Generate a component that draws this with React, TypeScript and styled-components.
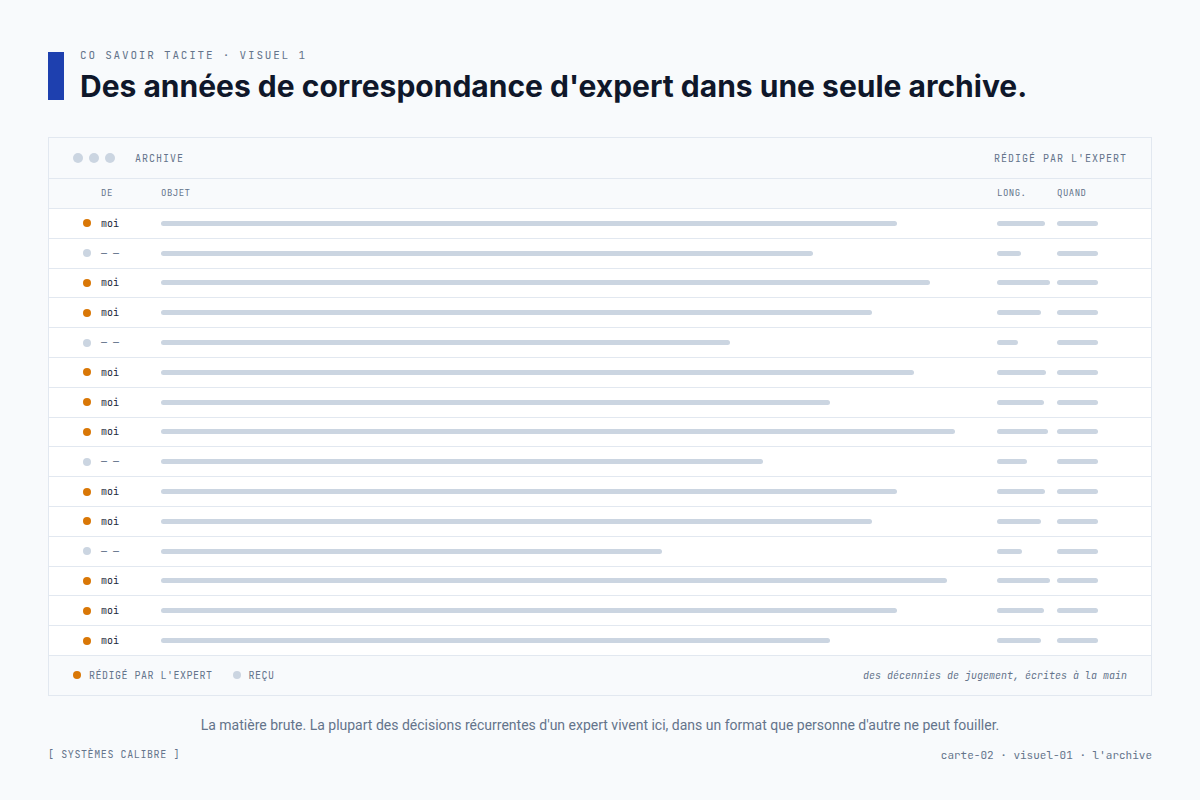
import React from 'react'
import styled, { createGlobalStyle } from 'styled-components'

const mono = `"JetBrains Mono", "DejaVu Sans Mono", monospace`

const GlobalStyle = createGlobalStyle`
  html, body {
    margin: 0;
    padding: 0;
    background: #f8fafc;
  }
  * {
    box-sizing: border-box;
  }
`

interface Row {
  mine: boolean
  subject: number
  length: number
}

const rows: Row[] = [
  { mine: true, subject: 736, length: 48 },
  { mine: false, subject: 652, length: 24 },
  { mine: true, subject: 769, length: 53 },
  { mine: true, subject: 711, length: 44 },
  { mine: false, subject: 569, length: 21 },
  { mine: true, subject: 753, length: 49 },
  { mine: true, subject: 669, length: 47 },
  { mine: true, subject: 794, length: 51 },
  { mine: false, subject: 602, length: 30 },
  { mine: true, subject: 736, length: 48 },
  { mine: true, subject: 711, length: 44 },
  { mine: false, subject: 501, length: 25 },
  { mine: true, subject: 786, length: 53 },
  { mine: true, subject: 736, length: 47 },
  { mine: true, subject: 669, length: 44 },
]

class App extends React.Component {
  render() {
    return (
      <Page>
        <GlobalStyle />
        <Heading>
          <Accent />
          <div>
            <Eyebrow>CO SAVOIR TACITE · VISUEL 1</Eyebrow>
            <Title>Des années de correspondance d'expert dans une seule archive.</Title>
          </div>
        </Heading>

        <Card>
          <WindowBar>
            <Lights>
              <Light />
              <Light />
              <Light />
            </Lights>
            <BarLabel>ARCHIVE</BarLabel>
            <BarLabel className="right">RÉDIGÉ PAR L'EXPERT</BarLabel>
          </WindowBar>

          <ColumnHead>
            <span />
            <ColLabel>DE</ColLabel>
            <ColLabel>OBJET</ColLabel>
            <ColLabel>LONG.</ColLabel>
            <ColLabel>QUAND</ColLabel>
          </ColumnHead>

          {rows.map((row, i) => (
            <MailRow key={i}>
              <Dot mine={row.mine} />
              <From mine={row.mine}>{row.mine ? 'moi' : '— —'}</From>
              <Cell><Bar style={{ width: row.subject }} /></Cell>
              <Cell><Bar style={{ width: row.length }} /></Cell>
              <Cell><Bar style={{ width: 41 }} /></Cell>
            </MailRow>
          ))}

          <Legend>
            <LegendItem>
              <Dot mine />
              RÉDIGÉ PAR L'EXPERT
            </LegendItem>
            <LegendItem>
              <Dot mine={false} />
              REÇU
            </LegendItem>
            <Note>des décennies de jugement, écrites à la main</Note>
          </Legend>
        </Card>

        <Caption>
          La matière brute. La plupart des décisions récurrentes d'un expert vivent ici, dans un format que personne d'autre ne peut fouiller.
        </Caption>

        <Foot>
          <span>[ SYSTÈMES CALIBRE ]</span>
          <span className="ref">carte-02 · visuel-01 · l'archive</span>
        </Foot>
      </Page>
    )
  }
}

const Page = styled.div`
  width: 1200px;
  height: 800px;
  padding: 48px 48px 0;
  background: #f8fafc;
`

const Heading = styled.header`
  display: flex;
  align-items: flex-start;
  gap: 16px;
  margin-bottom: 33px;
`

const Accent = styled.div`
  width: 16px;
  height: 48px;
  margin-top: 4px;
  background: #1e40af;
`

const Eyebrow = styled.div`
  font-family: ${mono};
  font-size: 11px;
  line-height: 14px;
  letter-spacing: 1.8px;
  color: #64748b;
  margin-bottom: 6px;
`

const Title = styled.h1`
  margin: 0;
  font-family: Inter, "Liberation Sans", sans-serif;
  font-size: 30px;
  line-height: 36px;
  font-weight: 700;
  color: #0f172a;
`

const Card = styled.section`
  border: 1px solid #e2e8f0;
  background: #ffffff;
`

const WindowBar = styled.div`
  display: flex;
  align-items: center;
  height: 41px;
  padding: 0 24px;
  background: #f8fafc;
  border-bottom: 1px solid #e2e8f0;
  .right {
    margin-left: auto;
  }
`

const Lights = styled.div`
  display: flex;
  gap: 6px;
  margin-right: 20px;
`

const Light = styled.span`
  width: 10px;
  height: 10px;
  border-radius: 50%;
  background: #cbd5e1;
`

const BarLabel = styled.span`
  font-family: ${mono};
  font-size: 10px;
  letter-spacing: 1px;
  color: #64748b;
`

const grid = `
  display: grid;
  grid-template-columns: 18px 60px 1fr 60px 70px;
  align-items: center;
  padding: 0 24px 0 34px;
`

const ColumnHead = styled.div`
  ${grid}
  height: 30px;
  background: #f8fafc;
  border-bottom: 1px solid #e2e8f0;
`

const ColLabel = styled.span`
  font-family: ${mono};
  font-size: 9px;
  line-height: 12px;
  letter-spacing: 0.5px;
  color: #64748b;
  margin-top: -2px;
`

const MailRow = styled.div`
  ${grid}
  height: 29.8px;
  border-bottom: 1px solid #e2e8f0;
`

const Dot = styled.span<{ mine?: boolean }>`
  width: 8px;
  height: 8px;
  border-radius: 50%;
  background: ${({ mine }) => (mine ? '#d97706' : '#cbd5e1')};
`

const From = styled.span<{ mine?: boolean }>`
  font-family: ${mono};
  font-size: 10px;
  color: ${({ mine }) => (mine ? '#1e293b' : '#64748b')};
`

const Cell = styled.div`
  display: flex;
  align-items: center;
`

const Bar = styled.span`
  display: block;
  height: 5px;
  border-radius: 3px;
  background: #cbd5e1;
`

const Legend = styled.div`
  display: flex;
  align-items: center;
  gap: 20px;
  height: 39px;
  padding: 0 24px;
  background: #f8fafc;
`

const LegendItem = styled.span`
  display: flex;
  align-items: center;
  gap: 8px;
  font-family: ${mono};
  font-size: 10px;
  letter-spacing: 0.5px;
  color: #64748b;
`

const Note = styled.span`
  margin-left: auto;
  font-family: ${mono};
  font-size: 10px;
  font-style: italic;
  color: #64748b;
`

const Caption = styled.p`
  margin: 20px 0 0;
  text-align: center;
  font-family: Roboto, "Liberation Sans", sans-serif;
  font-size: 14px;
  line-height: 18px;
  color: #64748b;
`

const Foot = styled.div`
  display: flex;
  justify-content: space-between;
  align-items: center;
  margin-top: 14px;
  font-family: ${mono};
  font-size: 10px;
  letter-spacing: 0.6px;
  color: #64748b;
  .ref {
    font-size: 11px;
    letter-spacing: 0;
  }
`

export default App
